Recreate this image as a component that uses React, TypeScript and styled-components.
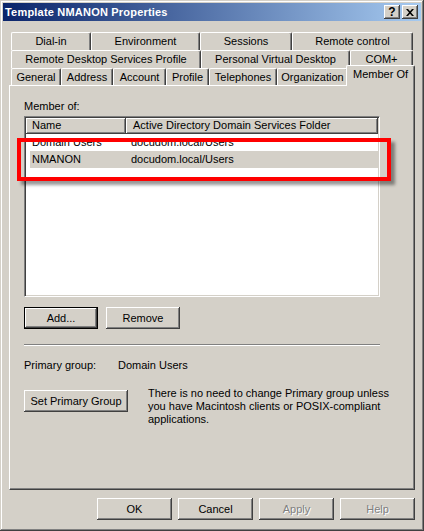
import styled, { createGlobalStyle } from "styled-components";

const GlobalStyle = createGlobalStyle`
    html, body {
        margin: 0;
        padding: 0;
        background: #d4d0c8;
    }
    body {
        font-family: "Liberation Sans", Arial, sans-serif;
        font-size: 11px;
        color: #000;
    }
`;

const raised = `
    box-shadow:
        inset -1px -1px #404040,
        inset 1px 1px #ffffff,
        inset -2px -2px #808080,
        inset 2px 2px #d4d0c8;
`;

const SWindow = styled.div`
    width: 424px;
    height: 531px;
    box-sizing: border-box;
    padding: 3px;
    background: #d4d0c8;
    display: flex;
    flex-direction: column;
    box-shadow:
        inset -1px -1px #404040,
        inset 1px 1px #d4d0c8,
        inset -2px -2px #808080,
        inset 2px 2px #ffffff;
`;

const STitleBar = styled.div`
    height: 18px;
    display: flex;
    align-items: center;
    justify-content: space-between;
    padding: 0 3px 0 2px;
    background: linear-gradient(to right, #0a246a, #a6caf0);
`;

const STitle = styled.span`
    color: #fff;
    font-weight: bold;
    font-size: 11px;
    letter-spacing: 0.2px;
`;

const SCaptionButtons = styled.div`
    display: flex;
    gap: 2px;
`;

const SCaptionButton = styled.div`
    width: 16px;
    height: 14px;
    background: #d4d0c8;
    display: flex;
    align-items: center;
    justify-content: center;
    font-weight: bold;
    font-size: 12px;
    line-height: 14px;
    ${raised}
`;

const SBody = styled.div`
    flex: 1;
    display: flex;
    flex-direction: column;
    padding: 11px 6px 0 6px;
`;

const STabRow = styled.div<{ $h: number }>`
    display: flex;
    height: ${(p) => p.$h}px;
    margin-left: 2px;
    align-items: flex-end;
`;

const STab = styled.div<{ $w: number; $active?: boolean }>`
    position: relative;
    box-sizing: border-box;
    width: ${(p) => p.$w}px;
    height: ${(p) => (p.$active ? "21px" : "100%")};
    margin: ${(p) => (p.$active ? "0 -1px -1px -2px" : "0")};
    z-index: ${(p) => (p.$active ? 2 : 1)};
    background: #d4d0c8;
    border-top: 1px solid #fff;
    border-left: 1px solid #fff;
    border-right: 1px solid #404040;
    border-radius: 2px 2px 0 0;
    box-shadow: inset -1px 0 #808080;
    display: flex;
    justify-content: center;
    padding-top: 2px;
    white-space: nowrap;
`;

const SPanel = styled.div`
    width: 406px;
    height: 405px;
    box-sizing: border-box;
    border-top: 1px solid #fff;
    border-left: 1px solid #fff;
    border-right: 1px solid #404040;
    border-bottom: 1px solid #404040;
    box-shadow: inset -1px -1px #808080;
    padding: 14px 0 0 14px;
    display: flex;
    flex-direction: column;
`;

const SLabel = styled.div`
    line-height: 13px;
    height: 13px;
`;

const SList = styled.div`
    position: relative;
    margin-top: 3px;
    width: 356px;
    height: 181px;
    box-sizing: border-box;
    background: #fff;
    border-top: 1px solid #808080;
    border-left: 1px solid #808080;
    border-right: 1px solid #fff;
    border-bottom: 1px solid #fff;
    box-shadow: inset 1px 1px #404040, inset -1px -1px #d4d0c8;
    padding: 1px;
`;

const SHeader = styled.div`
    display: flex;
    height: 16px;
`;

const SHeaderCell = styled.div<{ $w: number; $pad: number }>`
    width: ${(p) => p.$w}px;
    box-sizing: border-box;
    background: #d4d0c8;
    padding-left: ${(p) => p.$pad}px;
    line-height: 15px;
    ${raised}
`;

const SRow = styled.div<{ $selected?: boolean }>`
    display: flex;
    height: 17px;
    line-height: 17px;
    margin-left: 4px;
    width: 349px;
    background: ${(p) => (p.$selected ? "#d4d0c8" : "transparent")};
`;

const SCell = styled.div<{ $w: number; $pad: number }>`
    width: ${(p) => p.$w}px;
    padding-left: ${(p) => p.$pad}px;
    box-sizing: border-box;
    white-space: nowrap;
`;

const SHighlight = styled.div`
    position: absolute;
    left: -8px;
    top: 21px;
    width: 374px;
    height: 43px;
    box-sizing: border-box;
    border: 4px solid #ff0000;
    box-shadow: 4px 4px 3px rgba(0, 0, 0, 0.4);
    pointer-events: none;
`;

const SButtonRow = styled.div<{ $top: number }>`
    display: flex;
    gap: 8px;
    margin-top: ${(p) => p.$top}px;
`;

const SButton = styled.button<{ $w: number; $default?: boolean; $disabled?: boolean; $top?: number }>`
    width: ${(p) => p.$w}px;
    height: 22px;
    flex-shrink: 0;
    margin-top: ${(p) => p.$top ?? 0}px;
    padding: 0;
    border: none;
    background: #d4d0c8;
    font-family: "Liberation Sans", Arial, sans-serif;
    font-size: 11px;
    color: ${(p) => (p.$disabled ? "#808080" : "#000")};
    text-shadow: ${(p) => (p.$disabled ? "1px 1px #fff" : "none")};
    box-shadow: ${(p) =>
        p.$default
            ? "inset 0 0 0 1px #000, inset -2px -2px #404040, inset 2px 2px #fff, inset -3px -3px #808080"
            : "inset -1px -1px #404040, inset 1px 1px #fff, inset -2px -2px #808080, inset 2px 2px #d4d0c8"};
`;

const SSeparator = styled.div`
    margin-top: 15px;
    width: 356px;
    height: 1px;
    background: #808080;
    border-bottom: 1px solid #fff;
`;

const SPrimaryRow = styled.div`
    display: flex;
    margin-top: 13px;
    line-height: 13px;
`;

const SPrimaryLabel = styled.div`
    width: 94px;
`;

const SSetRow = styled.div`
    display: flex;
    margin-top: 15px;
    gap: 20px;
    align-items: flex-start;
`;

const SNote = styled.div`
    line-height: 13px;
    white-space: nowrap;
`;

const SFooter = styled.div`
    display: flex;
    justify-content: flex-end;
    gap: 6px;
    margin-top: 8px;
`;

const tabRows = [
    [
        { label: "Dial-in", w: 80 },
        { label: "Environment", w: 109 },
        { label: "Sessions", w: 92 },
        { label: "Remote control", w: 121 },
    ],
    [
        { label: "Remote Desktop Services Profile", w: 190 },
        { label: "Personal Virtual Desktop", w: 149 },
        { label: "COM+", w: 63 },
    ],
];

const frontTabs = [
    { label: "General", w: 50 },
    { label: "Address", w: 52 },
    { label: "Account", w: 53 },
    { label: "Profile", w: 43 },
    { label: "Telephones", w: 68 },
    { label: "Organization", w: 71 },
];

const groups = [
    { name: "Domain Users", folder: "docudom.local/Users" },
    { name: "NMANON", folder: "docudom.local/Users" },
];

const App = () => {
    return (
        <SWindow>
            <GlobalStyle />
            <STitleBar>
                <STitle>Template NMANON Properties</STitle>
                <SCaptionButtons>
                    <SCaptionButton>?</SCaptionButton>
                    <SCaptionButton>
                        <svg width="8" height="7" viewBox="0 0 8 7">
                            <path d="M0 0h2l2 2.2L6 0h2L5 3.5 8 7H6L4 4.8 2 7H0l3-3.5z" fill="#000" />
                        </svg>
                    </SCaptionButton>
                </SCaptionButtons>
            </STitleBar>

            <SBody>
                {tabRows.map((row, i) => (
                    <STabRow key={i} $h={18}>
                        {row.map((tab) => (
                            <STab key={tab.label} $w={tab.w}>{tab.label}</STab>
                        ))}
                    </STabRow>
                ))}
                <STabRow $h={17}>
                    {frontTabs.map((tab) => (
                        <STab key={tab.label} $w={tab.w}>{tab.label}</STab>
                    ))}
                    <STab $w={69} $active>Member Of</STab>
                </STabRow>

                <SPanel>
                    <SLabel>Member of:</SLabel>
                    <SList>
                        <SHeader>
                            <SHeaderCell $w={100} $pad={6}>Name</SHeaderCell>
                            <SHeaderCell $w={252} $pad={7}>Active Directory Domain Services Folder</SHeaderCell>
                        </SHeader>
                        {groups.map((g, index) => (
                            <SRow key={index} $selected={index === 1}>
                                <SCell $w={95} $pad={2}>{g.name}</SCell>
                                <SCell $w={250} $pad={6}>{g.folder}</SCell>
                            </SRow>
                        ))}
                        <SHighlight />
                    </SList>

                    <SButtonRow $top={10}>
                        <SButton $w={74} $default>Add...</SButton>
                        <SButton $w={74}>Remove</SButton>
                    </SButtonRow>

                    <SSeparator />

                    <SPrimaryRow>
                        <SPrimaryLabel>Primary group:</SPrimaryLabel>
                        <div>Domain Users</div>
                    </SPrimaryRow>

                    <SSetRow>
                        <SButton $w={104} $top={3}>Set Primary Group</SButton>
                        <SNote>
                            There is no need to change Primary group unless<br />
                            you have Macintosh clients or POSIX-compliant<br />
                            applications.
                        </SNote>
                    </SSetRow>
                </SPanel>

                <SFooter>
                    <SButton $w={75}>OK</SButton>
                    <SButton $w={75}>Cancel</SButton>
                    <SButton $w={75} $disabled>Apply</SButton>
                    <SButton $w={75} $disabled>Help</SButton>
                </SFooter>
            </SBody>
        </SWindow>
    );
};

export default App;
